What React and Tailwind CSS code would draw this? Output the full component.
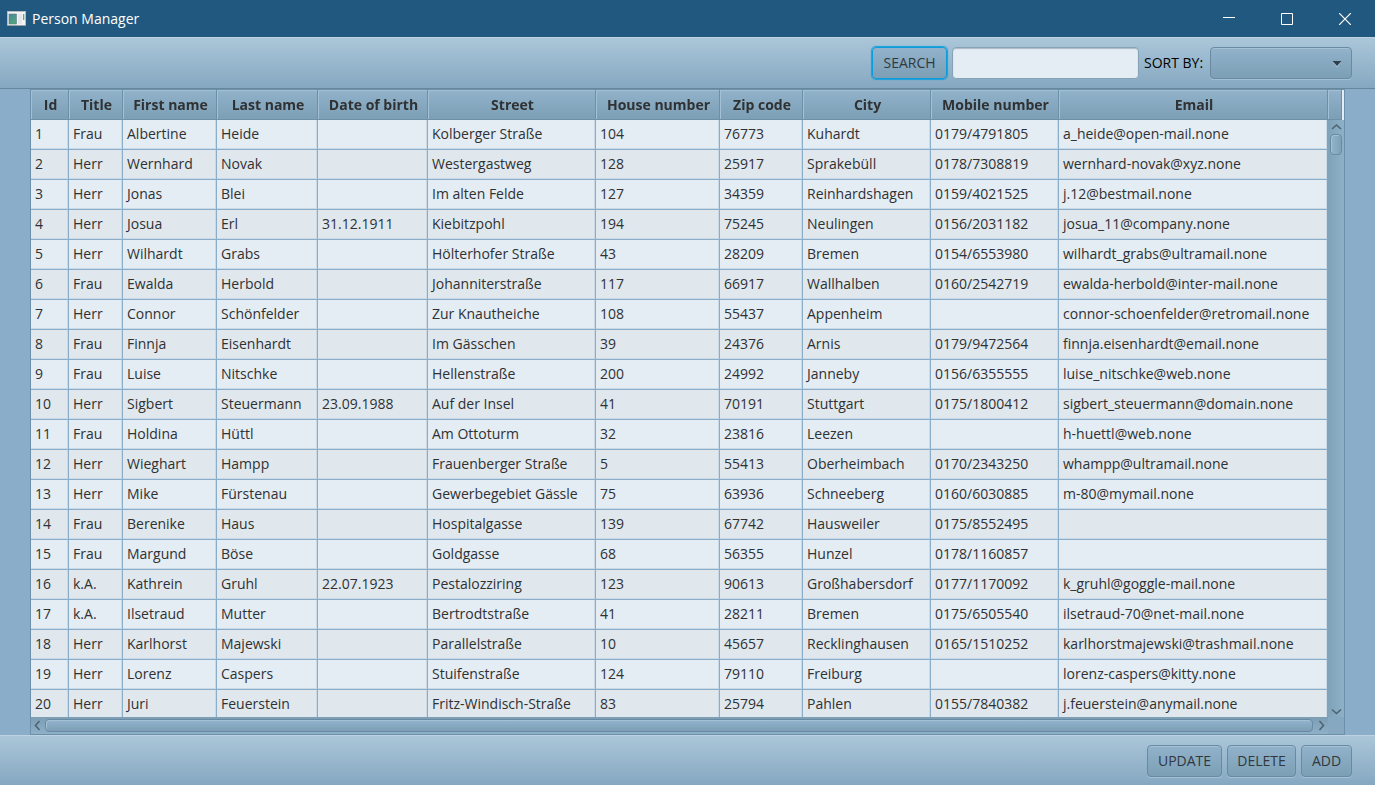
import React from "react";

const columns = [
  ["Id", "w-[38px]"],
  ["Title", "w-[54px]"],
  ["First name", "w-[94px]"],
  ["Last name", "w-[101px]"],
  ["Date of birth", "w-[110px]"],
  ["Street", "w-[168px]"],
  ["House number", "w-[124px]"],
  ["Zip code", "w-[83px]"],
  ["City", "w-[128px]"],
  ["Mobile number", "w-[128px]"],
  ["Email", "w-[269px]"],
];

const people = [
  ["Frau", "Albertine", "Heide", "", "Kolberger Straße", "104", "76773", "Kuhardt", "0179/4791805", "a_heide@open-mail.none"],
  ["Herr", "Wernhard", "Novak", "", "Westergastweg", "128", "25917", "Sprakebüll", "0178/7308819", "wernhard-novak@xyz.none"],
  ["Herr", "Jonas", "Blei", "", "Im alten Felde", "127", "34359", "Reinhardshagen", "0159/4021525", "j.12@bestmail.none"],
  ["Herr", "Josua", "Erl", "31.12.1911", "Kiebitzpohl", "194", "75245", "Neulingen", "0156/2031182", "josua_11@company.none"],
  ["Herr", "Wilhardt", "Grabs", "", "Hölterhofer Straße", "43", "28209", "Bremen", "0154/6553980", "wilhardt_grabs@ultramail.none"],
  ["Frau", "Ewalda", "Herbold", "", "Johanniterstraße", "117", "66917", "Wallhalben", "0160/2542719", "ewalda-herbold@inter-mail.none"],
  ["Herr", "Connor", "Schönfelder", "", "Zur Knautheiche", "108", "55437", "Appenheim", "", "connor-schoenfelder@retromail.none"],
  ["Frau", "Finnja", "Eisenhardt", "", "Im Gässchen", "39", "24376", "Arnis", "0179/9472564", "finnja.eisenhardt@email.none"],
  ["Frau", "Luise", "Nitschke", "", "Hellenstraße", "200", "24992", "Janneby", "0156/6355555", "luise_nitschke@web.none"],
  ["Herr", "Sigbert", "Steuermann", "23.09.1988", "Auf der Insel", "41", "70191", "Stuttgart", "0175/1800412", "sigbert_steuermann@domain.none"],
  ["Frau", "Holdina", "Hüttl", "", "Am Ottoturm", "32", "23816", "Leezen", "", "h-huettl@web.none"],
  ["Herr", "Wieghart", "Hampp", "", "Frauenberger Straße", "5", "55413", "Oberheimbach", "0170/2343250", "whampp@ultramail.none"],
  ["Herr", "Mike", "Fürstenau", "", "Gewerbegebiet Gässle", "75", "63936", "Schneeberg", "0160/6030885", "m-80@mymail.none"],
  ["Frau", "Berenike", "Haus", "", "Hospitalgasse", "139", "67742", "Hausweiler", "0175/8552495", ""],
  ["Frau", "Margund", "Böse", "", "Goldgasse", "68", "56355", "Hunzel", "0178/1160857", ""],
  ["k.A.", "Kathrein", "Gruhl", "22.07.1923", "Pestalozziring", "123", "90613", "Großhabersdorf", "0177/1170092", "k_gruhl@goggle-mail.none"],
  ["k.A.", "Ilsetraud", "Mutter", "", "Bertrodtstraße", "41", "28211", "Bremen", "0175/6505540", "ilsetraud-70@net-mail.none"],
  ["Herr", "Karlhorst", "Majewski", "", "Parallelstraße", "10", "45657", "Recklinghausen", "0165/1510252", "karlhorstmajewski@trashmail.none"],
  ["Herr", "Lorenz", "Caspers", "", "Stuifenstraße", "124", "79110", "Freiburg", "", "lorenz-caspers@kitty.none"],
  ["Herr", "Juri", "Feuerstein", "", "Fritz-Windisch-Straße", "83", "25794", "Pahlen", "0155/7840382", "j.feuerstein@anymail.none"],
];

const headerFill =
  "bg-linear-to-b from-[#91b2ca] to-[#7c9fb6] border-r border-b border-[#6c90a8] shadow-[inset_1px_1px_0_#a3c0d5]";
const buttonFace =
  "h-8 rounded border bg-linear-to-b from-[#91b2ca] to-[#7c9fb6] text-[#30383e]";
const plainButton = `${buttonFace} border-[#688ba3] shadow-[inset_0_1px_0_#a5c1d5,0_1px_0_#a3c0d5]`;
const barFill = "bg-linear-to-b from-[#abc6d9] to-[#85a8c1] border-t border-[#bdd3e3]";

function Chevron({ d, label, className }) {
  return (
    <button type="button" aria-label={label} className={`flex shrink-0 items-center justify-center ${className}`}>
      <svg width="11" height="11" viewBox="0 0 11 11" fill="none" stroke="#4d6473" strokeWidth="1.6">
        <path d={d} />
      </svg>
    </button>
  );
}

function TitleBar() {
  return (
    <header className="flex h-[37px] shrink-0 items-center justify-between bg-[#21587f] pl-[7px] text-white">
      <div className="flex items-center gap-[6px]">
        <svg width="19" height="16" viewBox="0 0 19 16">
          <defs>
            <linearGradient id="pane" x1="0" y1="0" x2="0.5" y2="1">
              <stop offset="0" stopColor="#4c86a0" />
              <stop offset="1" stopColor="#4fa579" />
            </linearGradient>
          </defs>
          <rect x="0.5" y="0.5" width="18" height="14" fill="#f4f4f4" stroke="#b9bcbd" />
          <rect x="2" y="3" width="7.5" height="10" fill="url(#pane)" stroke="#5c7f8c" strokeWidth="0.6" />
          <rect x="11" y="3" width="4" height="10" fill="#e4e8ec" />
          <rect x="16" y="3" width="1.3" height="6" fill="#58ad7e" />
          <path d="M0 14.5h19" stroke="#9c9fa0" />
        </svg>
        <h1>Person Manager</h1>
      </div>
      <div className="flex self-stretch pr-px">
        <button type="button" aria-label="Minimize" className="flex w-[58px] items-center justify-center">
          <svg width="12" height="12" viewBox="0 0 12 12" stroke="white"><path d="M0 4.5h12" /></svg>
        </button>
        <button type="button" aria-label="Maximize" className="flex w-[58px] items-center justify-center">
          <svg width="12" height="12" viewBox="0 0 12 12" stroke="white" fill="none"><path d="M.5 .5h11v11h-11z" /></svg>
        </button>
        <button type="button" aria-label="Close" className="flex w-[58px] items-center justify-center">
          <svg width="12" height="12" viewBox="0 0 12 12" stroke="white" strokeWidth="1.2"><path d="M0 0l12 12M12 0L0 12" /></svg>
        </button>
      </div>
    </header>
  );
}

function Toolbar() {
  return (
    <form className={`flex h-[52px] shrink-0 items-center justify-end gap-[5px] border-b border-b-[#66879d] pr-[23px] ${barFill}`}>
      <button type="button" className={`${buttonFace} w-[75px] border-[#0b9cdc] shadow-[0_0_1px_1px_#1b9fd9]`}>
        SEARCH
      </button>
      <input
        type="text"
        aria-label="Search text"
        className="h-8 w-[187px] rounded border border-[#86a3b6] bg-[#e4ecf4] px-2 shadow-[inset_0_1px_1px_#a9bac6] outline-none"
      />
      <label htmlFor="sort" className="w-[61px] text-black">SORT BY:</label>
      <div className="relative">
        <select id="sort" defaultValue="" className={`${plainButton} block w-[142px] appearance-none pl-2 pr-7 outline-none`}>
          <option value=""></option>
          {columns.map(([name]) => (
            <option key={name} value={name}>{name}</option>
          ))}
        </select>
        <svg className="pointer-events-none absolute right-[10px] top-[14px]" width="10" height="7" viewBox="0 0 10 7">
          <path d="M.5 1h9L5 6.5z" fill="#a9c4d6" />
          <path d="M.5 0h9L5 5z" fill="#2f414e" />
        </svg>
      </div>
    </form>
  );
}

function PersonTable() {
  return (
    <main className="mx-[30px] grid min-h-0 flex-1 grid-cols-[minmax(0,1fr)_16px] grid-rows-[minmax(0,1fr)_17px] border border-[#6c90a8]">
      <div className="overflow-y-auto [scrollbar-width:none]">
        <table className="w-full table-fixed border-separate border-spacing-0 whitespace-nowrap text-[#2f3133]">
          <thead className="sticky top-0">
            <tr>
              {columns.map(([name, width]) => (
                <th key={name} scope="col" className={`h-[30px] py-0 pr-0 pl-[2px] font-bold ${width} ${headerFill}`}>
                  {name}
                </th>
              ))}
            </tr>
          </thead>
          <tbody>
            {people.map((person, index) => (
              <tr key={index} className="odd:bg-[#e4ecf4] even:bg-[#e0e8ee]">
                {[index + 1, ...person].map((value, column) => (
                  <td
                    key={column}
                    className="h-[30px] border-r border-b border-[#8aaec9] pt-0 pr-0 pb-[2px] pl-1 shadow-[inset_-1px_-1px_0_#cbdae6] last:border-r-[#7fa3bb]"
                  >
                    {value}
                  </td>
                ))}
              </tr>
            ))}
          </tbody>
        </table>
      </div>
      <div className="flex min-h-0 flex-col bg-linear-to-r from-[#7fa2b9] to-[#8eb0c8]">
        <div className="h-[30px] shrink-0 border-r-2 border-r-[#e4ecf4]">
          <div className={`h-full ${headerFill}`} />
        </div>
        <Chevron label="Scroll up" d="M1 7L5.5 3L10 7" className="h-[14px]" />
        <div className="min-h-0 flex-1 px-[2px]">
          <div className="h-[21px] rounded border border-[#688ba3] bg-linear-to-r from-[#93b4cc] to-[#7fa1b8] shadow-[inset_1px_1px_0_#a5c1d5]" />
        </div>
        <Chevron label="Scroll down" d="M1 4.5L5.5 8.5L10 4.5" className="h-[14px]" />
      </div>
      <div className="flex items-center bg-linear-to-b from-[#7c9eb5] to-[#8eb0c8]">
        <Chevron label="Scroll left" d="M6.5 1L2.5 5.5L6.5 10" className="w-[14px]" />
        <div className="h-[13px] flex-1 rounded border border-[#688ba3] bg-linear-to-b from-[#93b4cc] to-[#7c9fb6] shadow-[inset_1px_1px_0_#a5c1d5]" />
        <Chevron label="Scroll right" d="M4.5 1L8.5 5.5L4.5 10" className="w-[15px]" />
      </div>
      <div className="bg-[#86a9c1]" />
    </main>
  );
}

export default function App() {
  return (
    <div className="flex h-screen flex-col bg-[#8aaec9] font-['Open_Sans','Noto_Sans',sans-serif] text-[14px] leading-5">
      <TitleBar />
      <Toolbar />
      <PersonTable />
      <footer className={`flex h-[50px] shrink-0 items-center justify-end gap-[5px] pr-[23px] ${barFill}`}>
        <button type="button" className={`${plainButton} w-[75px]`}>UPDATE</button>
        <button type="button" className={`${plainButton} w-[69px]`}>DELETE</button>
        <button type="button" className={`${plainButton} w-[51px]`}>ADD</button>
      </footer>
    </div>
  );
}
